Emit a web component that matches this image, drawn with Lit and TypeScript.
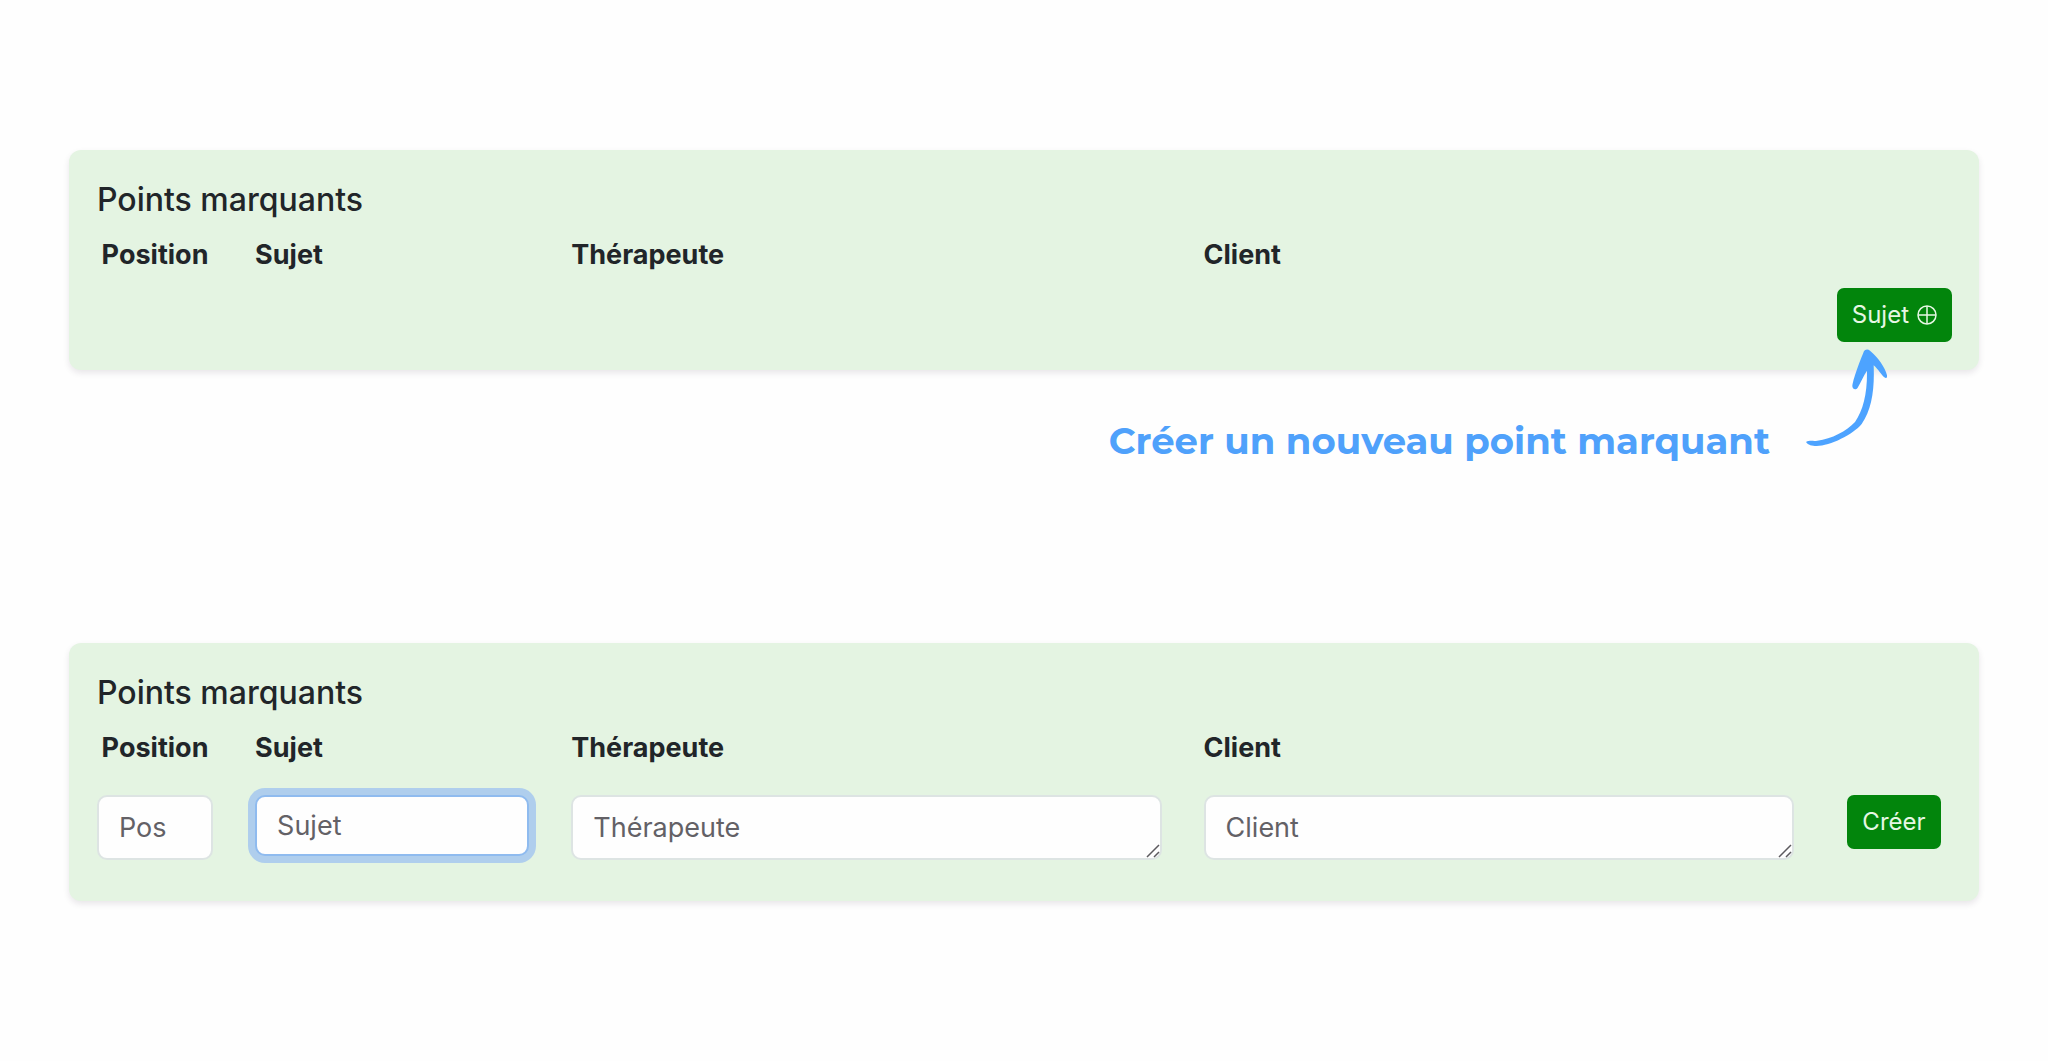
import { LitElement, html, css, svg } from "lit";
import { customElement, property } from "lit/decorators.js";

const plusCircle = svg`<circle cx="10" cy="10" r="9"></circle><path d="M10 1v18M1 10h18"></path>`;

/** Card listing the highlights; in "editing" mode it shows the creation form. */
@customElement("highlights-card")
class HighlightsCard extends LitElement {
  @property({ type: Boolean }) editing = false;

  static styles = css`
    :host {
      display: block;
    }
    .card {
      display: flex;
      flex-direction: column;
      gap: 14px;
      padding: 29px 27px 28px 28px;
      border-radius: 12px;
      background: #e4f4e2;
      box-shadow: 0 3px 6px rgba(40, 20, 50, 0.1);
      color: #212529;
    }
    .title {
      margin: 0;
      font-size: 32px;
      font-weight: 500;
      line-height: 42px;
    }
    .columns {
      display: grid;
      grid-template-columns: repeat(12, minmax(0, 1fr));
      column-gap: 42px;
      align-items: start;
    }
    .form {
      padding: 14px 0 13px;
    }
    .heading {
      font-size: 27px;
      font-weight: 700;
      line-height: 39px;
      white-space: nowrap;
    }
    .position {
      justify-self: center;
    }
    .subject {
      grid-column: span 2;
    }
    .wide {
      grid-column: span 4;
    }
    .area {
      position: relative;
      display: flex;
    }
    .field {
      box-sizing: border-box;
      display: block;
      width: 100%;
      height: 65px;
      margin: 0;
      padding: 10px 20px;
      border: 2px solid #dde4e3;
      border-radius: 10px;
      background: #fefefe;
      color: #212529;
      font: 400 27px/41px Inter, "Liberation Sans", sans-serif;
      outline: none;
    }
    .field::placeholder {
      color: #636166;
      opacity: 1;
    }
    .field.active,
    .field:focus {
      border-color: #8fbbef;
      box-shadow: 0 0 0 7px rgba(95, 150, 255, 0.4);
    }
    .field.active {
      height: 61px;
    }
    textarea.field {
      resize: vertical;
      overflow: hidden;
    }
    textarea.field::-webkit-resizer {
      background: transparent;
    }
    .grip {
      position: absolute;
      right: 2px;
      bottom: 2px;
      width: 14px;
      height: 14px;
      fill: none;
      stroke: #5c5a5f;
      stroke-width: 1.5;
      pointer-events: none;
    }
    .button {
      display: flex;
      align-items: center;
      gap: 8px;
      height: 54px;
      padding: 0 15px;
      border: 0;
      border-radius: 7px;
      background: #02850c;
      color: #e6f7e4;
      font: 400 24px/36px Inter, "Liberation Sans", sans-serif;
      cursor: pointer;
    }
    .add {
      align-self: flex-end;
    }
    .create {
      justify-self: center;
    }
    .icon {
      width: 20px;
      height: 20px;
      fill: none;
      stroke: currentColor;
      stroke-width: 1.5;
    }
  `;

  private heading(text: string, id: string, place: string) {
    return this.editing
      ? html`<label class="heading ${place}" for=${id}>${text}</label>`
      : html`<span class="heading ${place}">${text}</span>`;
  }

  private area(id: string, hint: string) {
    return html`<div class="area wide">
      <textarea class="field" id=${id} rows="1" placeholder=${hint}></textarea>
      <svg class="grip" viewBox="0 0 14 14" aria-hidden="true"><path d="M1 13 13 1M8 13l5-5"></path></svg>
    </div>`;
  }

  render() {
    return html`<section class="card">
      <h2 class="title">Points marquants</h2>
      <div class="columns">
        ${this.heading("Position", "position", "position")}
        ${this.heading("Sujet", "subject", "subject")}
        ${this.heading("Thérapeute", "therapist", "wide")}
        ${this.heading("Client", "client", "wide")}
      </div>
      ${this.editing
        ? html`<form class="columns form" @submit=${(e: Event) => e.preventDefault()}>
            <input class="field" id="position" type="text" placeholder="Pos" />
            <div class="subject">
              <input class="field active" id="subject" type="text" placeholder="Sujet" />
            </div>
            ${this.area("therapist", "Thérapeute")}
            ${this.area("client", "Client")}
            <button class="button create" type="submit">Créer</button>
          </form>`
        : html`<button class="button add" type="button">
            Sujet<svg class="icon" viewBox="0 0 20 20" aria-hidden="true">${plusCircle}</svg>
          </button>`}
    </section>`;
  }
}

@customElement("app-root")
class AppRoot extends LitElement {
  static styles = css`
    :host {
      display: block;
      box-sizing: border-box;
      min-height: 100vh;
      padding: 150px 69px;
      background: #fefefe;
      font-family: Inter, "Liberation Sans", sans-serif;
    }
    .callout {
      display: flex;
      justify-content: flex-end;
      gap: 36px;
      margin: -21px 0 182px;
      padding-right: 92px;
      position: relative;
      pointer-events: none;
    }
    .caption {
      margin: 0;
      padding-top: 71px;
      color: #4fa1fb;
      font: 700 37px/41px Montserrat, "DejaVu Sans", sans-serif;
    }
    .arrow {
      width: 81px;
      height: 97px;
      fill: #4da3ff;
    }
  `;

  render() {
    return html`
      <highlights-card></highlights-card>
      <div class="callout">
        <p class="caption">Créer un nouveau point marquant</p>
        <svg class="arrow" viewBox="18 27 243 291" aria-hidden="true">
          <path
            d="M18 306C28 300 40 304 52 302C95 297 140 273 165 246C190 210 202 160 201 92C190 108 184 124 173 143C168 151 158 149 157 139C158 120 180 62 190 38C193 28 203 26 210 32C232 50 256 82 261 106C262 114 258 116 253 112C243 104 235 88 221 76C224 150 215 208 185 252C160 283 90 318 50 318C36 318 24 315 18 306Z"
          ></path>
        </svg>
      </div>
      <highlights-card editing></highlights-card>
    `;
  }
}
